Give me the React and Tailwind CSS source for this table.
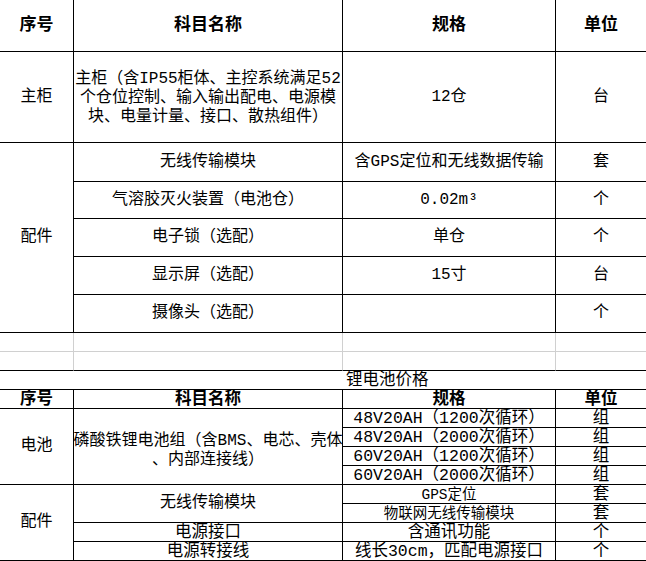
import React from "react";

const B = "border-black";

function C({ className = "", children }) {
  return (
    <div className={"flex items-center justify-center text-center overflow-hidden whitespace-nowrap " + className}>
      {children}
    </div>
  );
}

export default function App() {
  const top = "text-[16px] leading-[19px]";
  const tr = `border-r border-b ${B}`;
  const tl = `border-b ${B}`;
  const bot = "text-[16.5px] leading-[18px] pt-[2px]";
  const sm = "text-[14.5px] leading-[18px] pt-[2px]";
  return (
    <div className="w-[646px] h-[561px] bg-white text-black overflow-hidden font-['Liberation_Mono','Noto_Sans_CJK_SC',monospace]">
      {/* top table */}
      <div className="grid grid-cols-[74px_269px_213px_90px] grid-rows-[52px_91px_39px_37px_38px_38px_38px]">
        <C className={`${tr} text-[17px] font-bold`}>序号</C>
        <C className={`${tr} text-[17px] font-bold`}>科目名称</C>
        <C className={`${tr} text-[17px] font-bold`}>规格</C>
        <C className={`${tl} text-[17px] font-bold`}>单位</C>

        <C className={`${tr} ${top}`}>主柜</C>
        <C className={`${tr} ${top} pt-[3px]`}>
          <span>
            主柜（含IP55柜体、主控系统满足52
            <br />
            个仓位控制、输入输出配电、电源模
            <br />
            块、电量计量、接口、散热组件）
          </span>
        </C>
        <C className={`${tr} ${top}`}>12仓</C>
        <C className={`${tl} ${top}`}>台</C>

        <C className={`${tr} ${top} row-span-5`}>配件</C>
        <C className={`${tr} ${top}`}>无线传输模块</C>
        <C className={`${tr} ${top}`}>含GPS定位和无线数据传输</C>
        <C className={`${tl} ${top}`}>套</C>

        <C className={`${tr} ${top}`}>气溶胶灭火装置（电池仓）</C>
        <C className={`${tr} ${top}`}>0.02m³</C>
        <C className={`${tl} ${top}`}>个</C>

        <C className={`${tr} ${top}`}>电子锁（选配）</C>
        <C className={`${tr} ${top}`}>单仓</C>
        <C className={`${tl} ${top}`}>个</C>

        <C className={`${tr} ${top}`}>显示屏（选配）</C>
        <C className={`${tr} ${top}`}>15寸</C>
        <C className={`${tl} ${top}`}>台</C>

        <C className={`${tr} ${top}`}>摄像头（选配）</C>
        <C className={`${tr} ${top}`}></C>
        <C className={`${tl} ${top}`}>个</C>
      </div>

      {/* empty spreadsheet rows */}
      <div className="grid grid-cols-[74px_269px_213px_90px] grid-rows-[19px_19px]">
        <div className="border-r border-b border-[#d0d0d0]" />
        <div className="border-r border-b border-[#d0d0d0]" />
        <div className="border-r border-b border-[#d0d0d0]" />
        <div className="border-b border-[#d0d0d0]" />
        <div className="border-r border-r-[#d0d0d0] border-b border-b-black" />
        <div className="border-r border-r-[#d0d0d0] border-b border-b-black" />
        <div className="border-r border-r-[#d0d0d0] border-b border-b-black" />
        <div className="border-b border-b-black" />
      </div>

      {/* bottom table */}
      <div className="grid grid-cols-[74px_269px_213px_90px] grid-rows-[19px_19px_19px_19px_19px_19px_19px_19px_19px_19px]">
        <div className={`${tl} col-span-2`} />
        <div className={`${tl} col-span-2 flex items-center pl-[3px] ${bot}`}>锂电池价格</div>

        <C className={`${tr} ${bot} font-bold`}>序号</C>
        <C className={`${tr} ${bot} font-bold`}>科目名称</C>
        <C className={`${tr} ${bot} font-bold`}>规格</C>
        <C className={`${tl} ${bot} font-bold`}>单位</C>

        <C className={`${tr} text-[16px] leading-[19px] row-span-4`}>电池</C>
        <C className={`${tr} text-[16px] leading-[19px] row-span-4 pt-[8px]`}>
          <span>
            磷酸铁锂电池组（含BMS、电芯、壳体
            <br />
            、内部连接线）
          </span>
        </C>
        <C className={`${tr} ${bot}`}>48V20AH（1200次循环）</C>
        <C className={`${tl} ${bot}`}>组</C>
        <C className={`${tr} ${bot}`}>48V20AH（2000次循环）</C>
        <C className={`${tl} ${bot}`}>组</C>
        <C className={`${tr} ${bot}`}>60V20AH（1200次循环）</C>
        <C className={`${tl} ${bot}`}>组</C>
        <C className={`${tr} ${bot}`}>60V20AH（2000次循环）</C>
        <C className={`${tl} ${bot}`}>组</C>

        <C className={`${tr} text-[16px] leading-[19px] row-span-4`}>配件</C>
        <C className={`${tr} text-[16px] leading-[19px] row-span-2`}>无线传输模块</C>
        <C className={`${tr} ${sm}`}>GPS定位</C>
        <C className={`${tl} ${bot}`}>套</C>
        <C className={`${tr} ${sm}`}>物联网无线传输模块</C>
        <C className={`${tl} ${bot}`}>套</C>

        <C className={`${tr} ${bot}`}>电源接口</C>
        <C className={`${tr} ${bot}`}>含通讯功能</C>
        <C className={`${tl} ${bot}`}>个</C>

        <C className={`${tr} ${bot}`}>电源转接线</C>
        <C className={`${tr} ${bot}`}>线长30cm，匹配电源接口</C>
        <C className={`${tl} ${bot}`}>个</C>
      </div>
    </div>
  );
}
